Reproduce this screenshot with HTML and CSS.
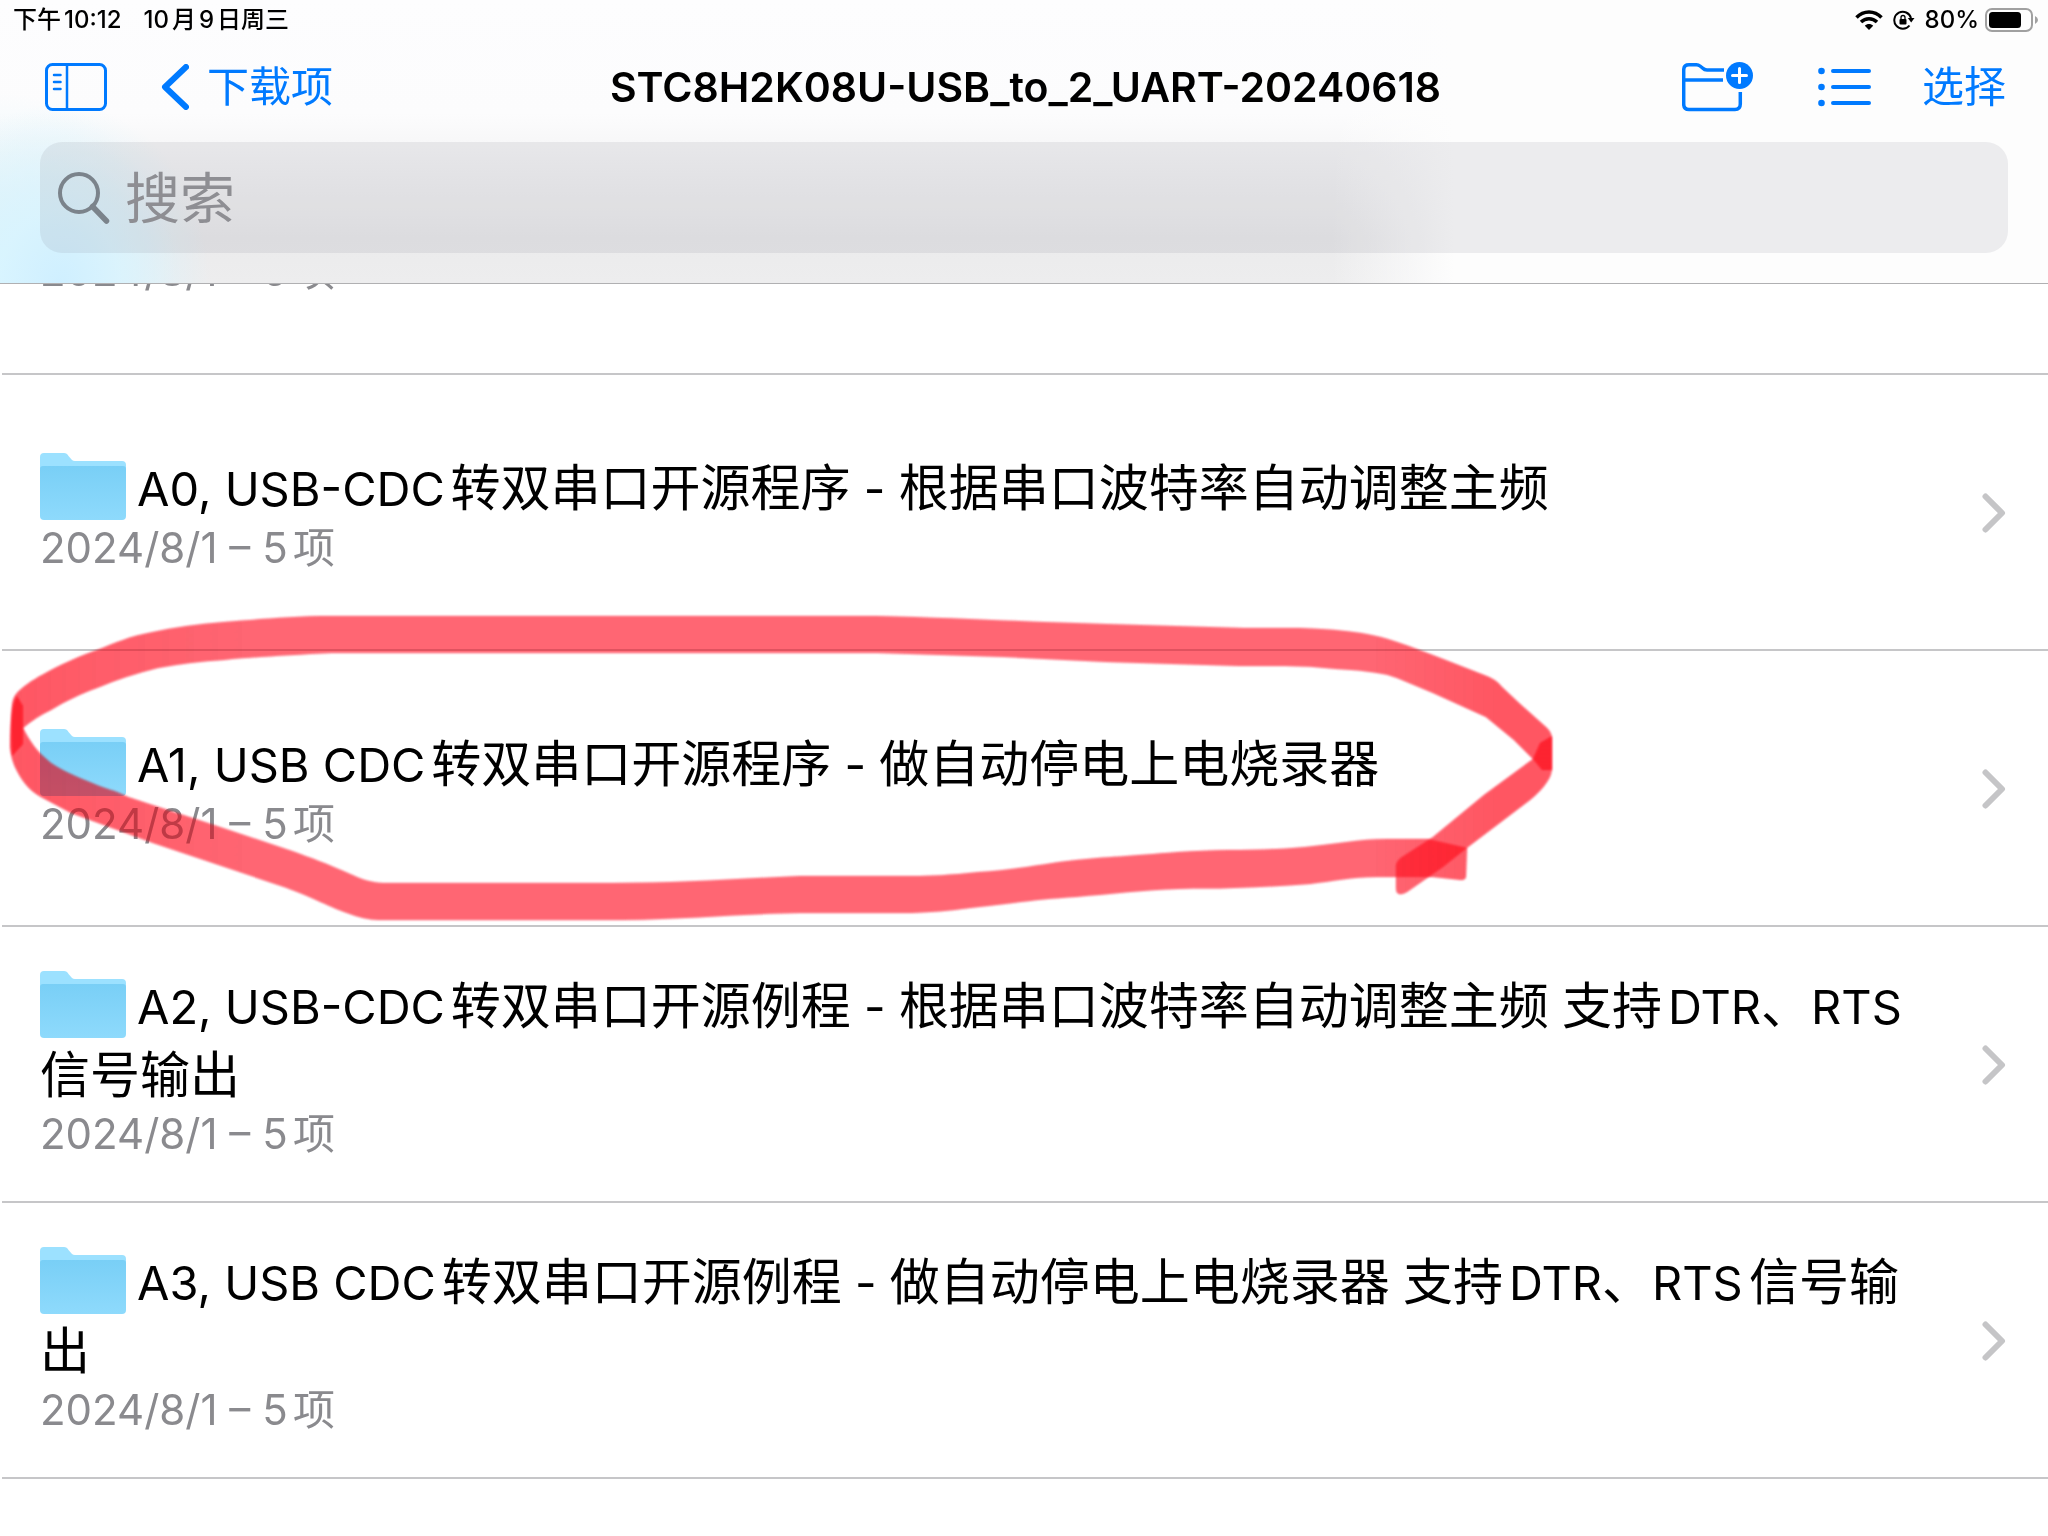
FILE: index.html
```html
<!DOCTYPE html>
<html lang="zh-CN">
<head>
<meta charset="utf-8">
<meta name="viewport" content="width=device-width, initial-scale=1">
<title>STC8H2K08U-USB_to_2_UART-20240618</title>
<link rel="stylesheet" href="styles.css">
</head>
<body>
<svg class="defs" aria-hidden="true">
  <defs>
    <linearGradient id="folder-front" x1="0" y1="0" x2="0" y2="1">
      <stop offset="0" stop-color="#79cff6"/>
      <stop offset="1" stop-color="#8edafc"/>
    </linearGradient>
    <symbol id="folder" viewBox="0 0 86 67">
      <path fill="#9ce1ff" d="M4 0H24Q27 0 28.500 3L32 7Q33 8 35 8H82Q86 8 86 12V60H0V4Q0 0 4 0Z"/>
      <path fill="url(#folder-front)" d="M3 13H83Q86 13 86 16V63Q86 67 82 67H4Q0 67 0 63V16Q0 13 3 13Z"/>
    </symbol>
    <symbol id="chevron" viewBox="0 0 24 40">
      <path d="M3.500 3.500L20 20L3.500 36.500" fill="none" stroke="#c5c5c7" stroke-width="6" stroke-linecap="round" stroke-linejoin="round"/>
    </symbol>
    <linearGradient id="ink" gradientUnits="userSpaceOnUse" x1="0" y1="0" x2="1560" y2="0">
      <stop offset="0" stop-color="#ff2a3f"/>
      <stop offset="0.060" stop-color="#ff2a3f" stop-opacity="0.950"/>
      <stop offset="0.160" stop-color="#ff2f45" stop-opacity="0.900"/>
      <stop offset="0.880" stop-color="#ff2f45" stop-opacity="0.900"/>
      <stop offset="0.960" stop-color="#ff2a3f"/>
    </linearGradient>
    <symbol id="stroke" viewBox="0 610 1560 320">
      <path d="M1467 848L1428 839H1387C1360 839 1335 844 1305 847C1265 851 1225 849 1178 852C1130 856 1105 857 1076 860C1040 864 1015 870 979 872C950 875 930 876 912 876H800C730 879 680 883 612 883H388C375 883 367 881 357 877C330 865 315 859 286 849L214 825L128 797C115 790 105 789 92 783C75 776 65 772 51 763C35 750 30 741 23 728V706L17 696Q10 706 10 747Q11 758 15 767C21 779 27 789 41 797L71 813L153 843L281 886C310 896 325 905 347 913Q365 920 378 920H622C690 919 740 914 800 913H912C940 912 955 910 979 907C1015 903 1040 899 1076 897C1110 894 1145 890 1178 889C1200 888 1215 889 1234 888C1260 887 1285 886 1310 884C1335 881 1350 877 1377 877H1433L1461 880Q1466 880 1466 876Z"/>
      <path d="M12 756Q10 710 13 700Q15 694 20 690C30 681 40 676 51 670C67 662 80 656 97 650C115 643 130 636 153 632Q185 625 224 622C265 619 290 616 332 616H877C960 618 1030 622 1106 624L1244 628H1300Q1335 629 1361 633Q1380 636 1397 642C1413 647 1427 653 1443 659L1484 675Q1496 679 1502 687L1519 703L1547 728Q1552 733 1552 740V770H1542L1533 759L1514 740L1486 717L1433 693L1397 678Q1387 674 1377 673Q1360 670 1336 669Q1310 666 1285 666H1239L1106 662L1004 657L877 653H332C290 655 255 657 224 660Q190 662 158 668Q125 676 97 688C80 694 66 701 51 710Q36 717 23 728V744Z"/>
      <path d="M1540 743L1552 736V767Q1552 775 1547 782Q1541 791 1530 800L1468 847L1443 867L1407 892Q1396 898 1396 888V866Q1396 861 1402 857L1433 837L1484 795L1533 759Z"/>
    </symbol>
  </defs>
</svg>

<header class="header">
  <div class="status">
    <span class="status-time">下午10:12</span>
    <span>10月9日周三</span>
    <div class="status-right">
      <svg class="wifi" viewBox="0 0 28 20" width="28" height="20" aria-hidden="true">
        <path fill="none" stroke="#000" stroke-width="3.500" d="M1.500 7.500C8.500 .2 19.500 .2 26.500 7.500M6 12C10.500 7.600 17.500 7.600 22 12"/>
        <path d="M14 20L9.800 15.700C12 13.500 16 13.500 18.200 15.700Z"/>
      </svg>
      <svg class="lock" viewBox="0 0 22 20" width="22" height="20" aria-hidden="true">
        <path fill="none" stroke="#000" stroke-width="2" d="M16.500 15.500A8.500 8.500 0 1 1 18 8"/>
        <path d="M14.800 8H21.500L18.200 12.500Z"/>
        <rect x="6.500" y="9" width="7" height="5.500" rx="1"/>
        <path fill="none" stroke="#000" stroke-width="1.300" d="M8 9V7.500A2 2 0 0 1 12 7.500V9"/>
      </svg>
      <span>80%</span>
      <svg viewBox="0 0 54 24" width="54" height="24" aria-hidden="true">
        <rect x="1" y="1" width="46" height="22" rx="6" fill="none" stroke="#a0a0a0" stroke-width="2"/>
        <rect x="4" y="4" width="32" height="16" rx="3.500"/>
        <path fill="#a0a0a0" d="M50 8Q53 9.500 53 12T50 16Z"/>
      </svg>
    </div>
  </div>

  <nav class="nav">
    <div class="nav-left">
      <button class="icon-button" type="button" aria-label="边栏">
        <svg viewBox="0 0 62 48" width="62" height="48" fill="none" stroke="currentColor" aria-hidden="true">
          <rect x="1.500" y="1.500" width="59" height="45" rx="6" stroke-width="3"/>
          <path stroke-width="2.500" d="M22 1V47"/>
          <path stroke-width="2.500" stroke-linecap="round" d="M9 12H15.500M9 19H15.500M9 26H15.500"/>
        </svg>
      </button>
      <a class="back" href="#">
        <svg viewBox="0 0 28 46" width="28" height="46" aria-hidden="true">
          <path d="M25 3L4 23L25 43" fill="none" stroke="currentColor" stroke-width="6" stroke-linecap="round" stroke-linejoin="round"/>
        </svg>
        下载项
      </a>
    </div>
    <h1 class="title">STC8H2K08U-USB_to_2_UART-20240618</h1>
    <div class="nav-right">
      <button class="icon-button" type="button" aria-label="新建文件夹">
        <svg viewBox="0 0 72 50" width="72" height="50" fill="none" stroke="currentColor" stroke-width="3.500" aria-hidden="true">
          <path d="M42 8H25Q22.500 8 20.500 6L18 4Q16.500 2.800 14.500 2.800H7Q1.700 2.800 1.700 8V42Q1.700 47.500 7 47.500H53Q58.300 47.500 58.300 42V30M2 18H41"/>
          <circle cx="57.500" cy="13.500" r="13.500" fill="currentColor" stroke="none"/>
          <path stroke="#fff" stroke-width="3" stroke-linecap="round" d="M50.500 13.500H64.500M57.500 6.500V20.500"/>
        </svg>
      </button>
      <button class="icon-button" type="button" aria-label="列表">
        <svg viewBox="0 0 54 40" width="54" height="40" fill="currentColor" aria-hidden="true">
          <circle cx="3.500" cy="4" r="3.300"/><circle cx="3.500" cy="20" r="3.300"/><circle cx="3.500" cy="36" r="3.300"/>
          <path stroke="currentColor" stroke-width="4" stroke-linecap="round" d="M15 4H51M15 20H51M15 36H51"/>
        </svg>
      </button>
      <button class="text-button" type="button">选择</button>
    </div>
  </nav>

  <label class="search">
    <svg viewBox="0 0 52 52" width="52" height="52" aria-hidden="true">
      <circle cx="21" cy="21" r="19" fill="none" stroke="#7b838b" stroke-width="4"/>
      <path d="M34.500 34.500L48.500 49" stroke="#7b838b" stroke-width="5.500" stroke-linecap="round"/>
    </svg>
    <input class="search-input" type="search" placeholder="搜索" aria-label="搜索">
  </label>
</header>

<main class="list">
  <div class="row row-clipped">
    <p class="meta">2024/8/1 – 5项</p>
  </div>
  <a class="row" href="#">
    <div class="body">
      <h2 class="name"><svg class="folder" aria-hidden="true"><use href="#folder"/></svg><span class="latin">A0, USB-CDC</span>转双串口开源程序<span class="latin"> - </span>根据串口波特率自动调整主频</h2>
      <p class="meta">2024/8/1 – 5项</p>
    </div>
    <svg class="chevron" aria-hidden="true"><use href="#chevron"/></svg>
  </a>
  <a class="row" href="#">
    <div class="body">
      <h2 class="name"><svg class="folder" aria-hidden="true"><use href="#folder"/></svg><span class="latin">A1, USB CDC</span>转双串口开源程序<span class="latin"> - </span>做自动停电上电烧录器</h2>
      <p class="meta">2024/8/1 – 5项</p>
    </div>
    <svg class="chevron" aria-hidden="true"><use href="#chevron"/></svg>
    <svg class="marker marker-ink" aria-hidden="true"><use href="#stroke"/></svg>
    <svg class="marker marker-tint" aria-hidden="true"><use href="#stroke"/></svg>
  </a>
  <a class="row" href="#">
    <div class="body">
      <h2 class="name"><svg class="folder" aria-hidden="true"><use href="#folder"/></svg><span class="latin">A2, USB-CDC</span>转双串口开源例程<span class="latin"> - </span>根据串口波特率自动调整主频<span class="latin"> </span>支持<span class="latin">DTR</span>、<span class="latin">RTS</span><span class="tight">信号输出</span></h2>
      <p class="meta">2024/8/1 – 5项</p>
    </div>
    <svg class="chevron" aria-hidden="true"><use href="#chevron"/></svg>
  </a>
  <a class="row" href="#">
    <div class="body">
      <h2 class="name"><svg class="folder" aria-hidden="true"><use href="#folder"/></svg><span class="latin">A3, USB CDC</span>转双串口开源例程<span class="latin"> - </span>做自动停电上电烧录器<span class="latin"> </span>支持<span class="latin">DTR</span>、<span class="latin">RTS</span>信号输出</h2>
      <p class="meta">2024/8/1 – 5项</p>
    </div>
    <svg class="chevron" aria-hidden="true"><use href="#chevron"/></svg>
  </a>
</main>
</body>
</html>
```
FILE: styles.css
```css
* {
  box-sizing: border-box;
}

body {
  margin: 0;
  background: #fff;
  color: #000;
  font-family: Inter, "Noto Sans CJK SC", sans-serif;
  text-autospace: normal;
}

h1, h2, p {
  margin: 0;
  font-weight: 400;
}

a {
  color: inherit;
  text-decoration: none;
}

button {
  display: flex;
  padding: 0;
  border: 0;
  background: none;
  color: #007aff;
  font: inherit;
}

svg {
  flex: none;
}

.defs {
  position: absolute;
  width: 0;
  height: 0;
}

/* Translucent header with the blurred list behind it */
.header {
  border-bottom: 1px solid #b0b0b2;
  background:
    radial-gradient(ellipse 150px 180px at 60px 100%, #cfefff 0%, #d8f4ffcc 40%, #e8faff00 100%),
    radial-gradient(ellipse 180px 190px at 0 100%, #d8f6ff 0%, #e8fbff00 100%),
    linear-gradient(to right, #fdfdfd00 65%, #fdfdfd 71%),
    linear-gradient(to bottom, #fdfdfe 0%, #fcfcfd 40%, #f5f5f6 56%, #ebebec 84%, #ededee 100%);
}

.status {
  display: flex;
  align-items: center;
  gap: 22px;
  height: 40px;
  padding: 0 9px 0 13px;
  font-size: 24px;
  font-weight: 500;
  line-height: 40px;
}

.status-right {
  display: flex;
  align-items: center;
  gap: 6px;
  margin-left: auto;
}

.wifi {
  margin-right: 4px;
}

.lock {
  margin-right: 4px;
}

.nav {
  display: grid;
  grid-template-columns: 1fr auto 1fr;
  align-items: center;
  height: 94px;
  padding: 0 42px 0 45px;
  font-size: 42px;
  line-height: 60px;
}

.nav-left,
.nav-right {
  display: flex;
  align-items: center;
}

.nav-left {
  gap: 54px;
}

.nav-right {
  justify-content: flex-end;
  gap: 50px;
}

.nav-right .icon-button:first-child {
  margin-right: 14px;
}

.back {
  display: flex;
  align-items: center;
  gap: 18px;
  color: #007aff;
}

.title {
  font-size: 41px;
  font-weight: 600;
}

.search {
  display: flex;
  align-items: center;
  gap: 15px;
  height: 111px;
  margin: 8px 40px 30px;
  padding: 0 18px;
  border-radius: 22px;
  background: #7676801f;
}

.search-input {
  flex: 1;
  min-width: 0;
  padding: 0;
  border: 0;
  background: none;
  color: #000;
  font: inherit;
  font-size: 55px;
  line-height: 80px;
  outline: none;
}

.search-input::placeholder {
  color: #8e8e93;
  opacity: 1;
}

.row {
  position: relative;
  display: flex;
  align-items: center;
  justify-content: space-between;
  min-height: 276px;
  padding: 0 42px 0 40px;
}

.row::after {
  content: "";
  position: absolute;
  inset: auto 0 0 2px;
  height: 2px;
  background: #c6c6c8;
}

.row-clipped {
  align-items: flex-start;
  min-height: 91px;
  height: 91px;
  overflow: hidden;
}

.row-clipped .meta {
  margin-top: -38px;
}

.body {
  flex: 1;
  margin-right: 52px;
}

.name {
  font-size: 50px;
  line-height: 68px;
}

.latin {
  font-size: 47px;
}

.tight {
  text-autospace: no-autospace;
}

.meta {
  color: #8a8a8e;
  font-size: 42px;
  line-height: 50px;
}

.folder {
  width: 86px;
  height: 67px;
  margin-right: 11px;
  vertical-align: -14px;
}

.chevron {
  width: 24px;
  height: 40px;
}

/* Highlighter stroke drawn around the row */
.marker {
  position: absolute;
  top: -41px;
  left: 0;
  z-index: 1;
  width: 1560px;
  height: 320px;
  fill: url(#ink);
  filter: blur(1px);
}

.marker-ink {
  fill-opacity: 0.5;
}

.marker-tint {
  fill-opacity: 0.5;
  mix-blend-mode: multiply;
}
```
